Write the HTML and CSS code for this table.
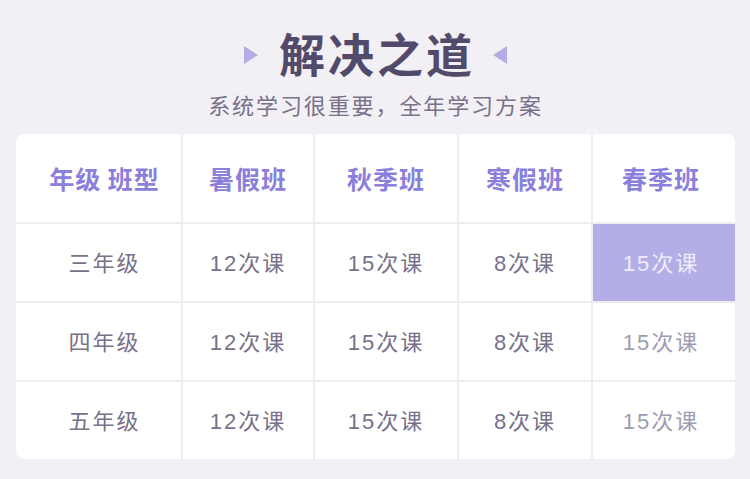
FILE: index.html
```html
<!DOCTYPE html>
<html lang="zh-CN">
<head>
<meta charset="utf-8">
<link rel="stylesheet" href="styles.css">
</head>
<body>
<div class="page">
  <header class="head">
    <div class="title-row">
      <span class="tri tri-right"></span>
      <h1 class="title">解决之道</h1>
      <span class="tri tri-left"></span>
    </div>
    <p class="subtitle">系统学习很重要，全年学习方案</p>
  </header>
  <div class="card">
    <div class="grid">
      <div class="cell th first">年级 班型</div>
      <div class="cell th">暑假班</div>
      <div class="cell th">秋季班</div>
      <div class="cell th">寒假班</div>
      <div class="cell th last">春季班</div>

      <div class="cell first">三年级</div>
      <div class="cell">12次课</div>
      <div class="cell">15次课</div>
      <div class="cell">8次课</div>
      <div class="cell last active">15次课</div>

      <div class="cell first">四年级</div>
      <div class="cell">12次课</div>
      <div class="cell">15次课</div>
      <div class="cell">8次课</div>
      <div class="cell last muted">15次课</div>

      <div class="cell first">五年级</div>
      <div class="cell">12次课</div>
      <div class="cell">15次课</div>
      <div class="cell">8次课</div>
      <div class="cell last muted">15次课</div>
    </div>
  </div>
</div>
</body>
</html>
```
FILE: styles.css
```css
* { box-sizing: border-box; }
html, body {
  margin: 0;
  padding: 0;
  background: #f2f0f4;
  font-family: "Noto Sans CJK SC", "Noto Sans", sans-serif;
}
.page {
  width: 750px;
  height: 479px;
  padding: 24px 15px 0 16px;
}
.head {
  display: flex;
  flex-direction: column;
  align-items: center;
}
.title-row {
  display: flex;
  align-items: center;
  gap: 18px;
  height: 62px;
}
.title {
  margin: 0;
  font-size: 46px;
  font-weight: 700;
  line-height: 62px;
  letter-spacing: 3px;
  color: #524a6b;
  padding-left: 3px;
  position: relative;
  top: -3px;
}
.tri {
  width: 0;
  height: 0;
  border-top: 9.5px solid transparent;
  border-bottom: 9.5px solid transparent;
}
.tri-right { border-left: 14px solid #b3ade6; }
.tri-left { border-right: 14px solid #b3ade6; }
.subtitle {
  margin: 3px 0 0;
  font-size: 22px;
  line-height: 30px;
  letter-spacing: 1.9px;
  color: #77718a;
}
.card {
  margin-top: 15px;
  width: 719px;
  border-radius: 8px;
  overflow: hidden;
  background: #ffffff;
}
.grid {
  display: grid;
  grid-template-columns: 165px 130px 142px 132px 1fr;
  grid-template-rows: 88px 77px 77px 77px;
  gap: 2px;
  background: #efedf1;
}
.cell {
  background: #ffffff;
  display: flex;
  align-items: center;
  justify-content: center;
  font-family: "Liberation Sans", "Noto Sans CJK SC", sans-serif;
  font-size: 22px;
  letter-spacing: 2px;
  color: #77718a;
  padding-bottom: 4px;
}
.cell.first { padding-left: 12px; }
.cell.last { padding-right: 6px; }
.cell.th {
  font-family: "Noto Sans CJK SC", sans-serif;
  font-size: 25px;
  font-weight: 700;
  letter-spacing: 1px;
  color: #8a80dc;
  padding-bottom: 0;
  padding-top: 0;
}
.cell.active {
  background: #b3aee6;
  color: #eeecfa;
}
.cell.muted { color: #a09bb0; }
```
